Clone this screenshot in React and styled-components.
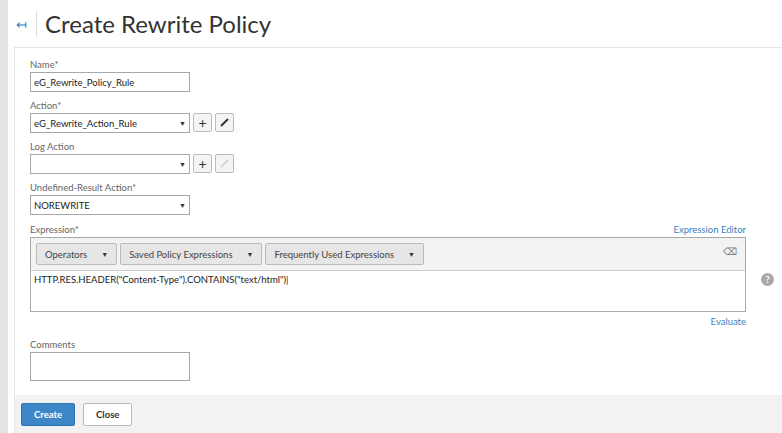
import React from "react";
import styled, { createGlobalStyle } from "styled-components";

const G = createGlobalStyle`
  body { margin:0; font-family: Lato, "Open Sans", sans-serif; background:#fff; }
  * { box-sizing: border-box; }
`;
const Page = styled.div`display:flex; width:782px; height:433px; overflow:hidden;`;
const Strip = styled.div`width:8px; background:#e3e3e3; flex:none;`;
const Main = styled.div`flex:1; display:flex; flex-direction:column; padding-left:6px;`;
const Header = styled.div`flex:none; height:48px; display:flex; align-items:center; gap:8px; padding-left:2px; border-bottom:1px solid #e6e6e6;`;
const Back = styled.span`color:#3a7fc1; font-size:13px; width:12px;`;
const Sep = styled.div`width:1px; height:26px; background:#ddd;`;
const Title = styled.h1`margin:0; font-weight:400; font-size:24px; color:#333;`;
const Body = styled.div`flex:1; border-left:1px solid #e6e6e6; padding:12px 0 0 15px; position:relative;`;
const Field = styled.div`display:flex; flex-direction:column; margin-bottom:${p=>p.mb??9}px;`;
const Label = styled.div`font-size:9.5px; color:#666; height:9px; line-height:9px; margin-bottom:3px; display:flex; justify-content:space-between; width:${p=>p.w||"auto"};`;
const Link = styled.span`color:#3a7fc1;`;
const Input = styled.div`width:160px; height:${p=>p.h||20}px; border:1px solid #a8a8a8; font-size:9.5px; color:#222; padding:3px 3px; background:#fff; display:flex; align-items:center;`;
const Row = styled.div`display:flex; gap:3px;`;
const IconBtn = styled.div`width:19px; height:19px; border:1px solid #bbb; border-radius:2px; background:#f4f4f4; display:flex; align-items:center; justify-content:center; color:${p=>p.dis?"#ccc":"#333"}; font-size:14px;`;
const Caret = styled.span`font-size:7px; color:#333; margin-left:auto;`;
const ExprBox = styled.div`width:716px; height:75px; border:1px solid #aaa; display:flex; flex-direction:column;`;
const Toolbar = styled.div`height:33px; background:#f3f3f3; border-bottom:1px solid #ccc; display:flex; align-items:center; padding-left:5px; gap:3px; position:relative;`;
const TBtn = styled.div`height:22px; border:1px solid #bbb; background:#e6e6e6; border-radius:2px; font-size:9.5px; color:#444; display:flex; align-items:center; gap:14px; padding:0 8px; white-space:nowrap;`;
const ExprText = styled.div`font-size:9.5px; color:#222; padding:3px 3px;`;
const Clear = styled.div`position:absolute; right:8px; top:7px; font-size:10px; color:#777;`;
const Help = styled.div`position:absolute; left:746px; top:225px; width:13px; height:13px; border-radius:50%; background:#a8a8a8; color:#fff; font-size:9px; font-weight:700; display:flex; align-items:center; justify-content:center;`;
const Eval = styled.div`width:716px; text-align:right; font-size:9.5px; color:#3a7fc1; margin-top:4px;`;
const Footer = styled.div`flex:none; height:38px; background:#f2f2f2; border-left:1px solid #e6e6e6; display:flex; align-items:center; gap:8px; padding-left:6px;`;
const Btn = styled.div`height:23px; padding:0 12px; border-radius:2px; font-size:9.5px; font-weight:700; display:flex; align-items:center;
  background:${p=>p.primary?"#3d87c8":"#fff"}; color:${p=>p.primary?"#fff":"#333"}; border:1px solid ${p=>p.primary?"#2f75b3":"#bbb"};`;

const Select = ({children}) => <Input>{children}<Caret>▼</Caret></Input>;

export default function App(){
  return <Page><G/><Strip/><Main>
    <Header><Back>↤</Back><Sep/><Title>Create Rewrite Policy</Title></Header>
    <Body>
      <Field><Label>Name*</Label><Input>eG_Rewrite_Policy_Rule</Input></Field>
      <Field><Label>Action*</Label><Row><Select>eG_Rewrite_Action_Rule</Select><IconBtn>+</IconBtn><IconBtn>
        <svg width="11" height="11" viewBox="0 0 11 11"><path d="M2 9 L9 2" stroke="#333" strokeWidth="2"/></svg></IconBtn></Row></Field>
      <Field><Label>Log Action</Label><Row><Select></Select><IconBtn>+</IconBtn><IconBtn dis>
        <svg width="11" height="11" viewBox="0 0 11 11"><path d="M2 9 L9 2" stroke="#ccc" strokeWidth="1.5"/></svg></IconBtn></Row></Field>
      <Field mb={10}><Label>Undefined-Result Action*</Label><Select>NOREWRITE</Select></Field>
      <Field mb={0}><Label w="716px"><span>Expression*</span><Link>Expression Editor</Link></Label>
        <ExprBox>
          <Toolbar>
            <TBtn>Operators <Caret>▼</Caret></TBtn>
            <TBtn>Saved Policy Expressions <Caret>▼</Caret></TBtn>
            <TBtn>Frequently Used Expressions <Caret>▼</Caret></TBtn>
            <Clear>⌫</Clear>
          </Toolbar>
          <ExprText>HTTP.RES.HEADER("Content-Type").CONTAINS("text/html")|</ExprText>
        </ExprBox>
        <Eval>Evaluate</Eval>
      </Field>
      <Field mb={0} style={{marginTop:13}}><Label>Comments</Label><Input h={29}/></Field>
      <Help>?</Help>
    </Body>
    <Footer><Btn primary>Create</Btn><Btn>Close</Btn></Footer>
  </Main></Page>;
}
